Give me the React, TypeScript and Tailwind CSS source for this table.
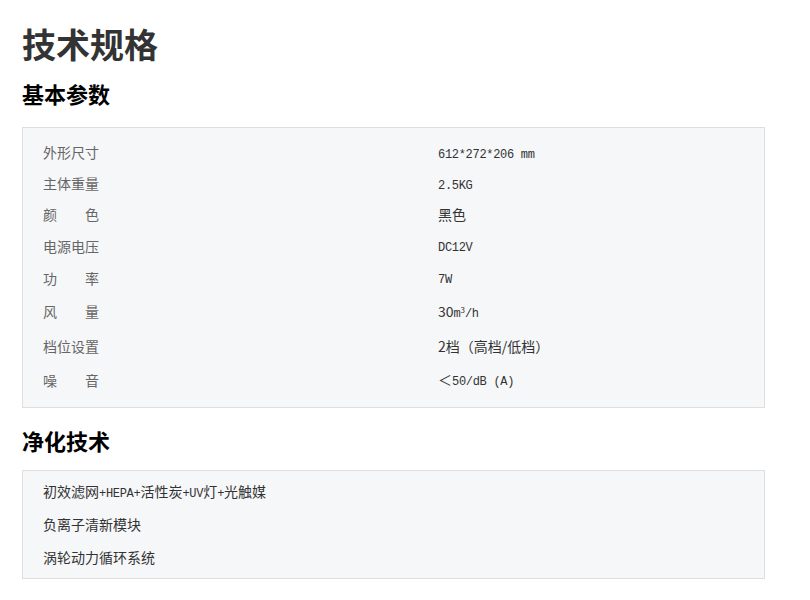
const CJK = "font-['Noto_Sans_CJK_SC','Noto_Sans',sans-serif]";
const MONO = "font-['Liberation_Mono','Noto_Sans_CJK_SC',monospace] text-[12px] tracking-[-0.3px]";

type Row = { label: string; value: React.ReactNode; h: string };

const SPECS: Row[] = [
  { label: "外形尺寸", value: <span className={MONO}>612*272*206 mm</span>, h: "h-[31px]" },
  { label: "主体重量", value: <span className={MONO}>2.5KG</span>, h: "h-[31px]" },
  { label: "颜　　色", value: <span>黑色</span>, h: "h-[31px]" },
  { label: "电源电压", value: <span className={MONO}>DC12V</span>, h: "h-[32px]" },
  { label: "功　　率", value: <span className={MONO}>7W</span>, h: "h-[32px]" },
  {
    label: "风　　量",
    value: (
      <span>
        30<span className={MONO}>m</span>
        <sup className="text-[8px]">3</sup>
        <span className={MONO}>/h</span>
      </span>
    ),
    h: "h-[35px]",
  },
  { label: "档位设置", value: <span>2档（高档/低档）</span>, h: "h-[34px]" },
  {
    label: "噪　　音",
    value: (
      <span>
        ＜<span className={MONO}>50/dB (A)</span>
      </span>
    ),
    h: "h-[34px]",
  },
];

const TECH: { text: React.ReactNode; h: string }[] = [
  {
    text: (
      <span>
        初效滤网<span className={MONO}>+HEPA+</span>活性炭<span className={MONO}>+UV</span>灯
        <span className={MONO}>+</span>光触媒
      </span>
    ),
    h: "h-[32px]",
  },
  { text: "负离子清新模块", h: "h-[32px]" },
  { text: "涡轮动力循环系统", h: "h-[34px]" },
];

export default function App() {
  return (
    <div className={`min-h-[600px] w-[810px] bg-white px-[22px] ${CJK}`}>
      <h1 className="pt-[27px] text-[34px] font-bold leading-[34px] text-[#333]">技术规格</h1>

      <h2 className="mt-[21px] text-[22px] font-bold leading-[22px] text-black">基本参数</h2>
      <div className="mt-[23px] w-[743px] border border-[#dfdfdf] bg-[#f6f7f9] pl-[20px] pt-[9px] pb-[10px]">
        {SPECS.map((r) => (
          <div key={r.label} className={`flex items-center ${r.h} text-[14px]`}>
            <div className="w-[395px] text-[#666]">{r.label}</div>
            <div className="text-[#333]">{r.value}</div>
          </div>
        ))}
      </div>

      <h2 className="mt-[21px] text-[22px] font-bold leading-[22px] text-black">净化技术</h2>
      <div className="mt-[19px] w-[743px] border border-[#dfdfdf] bg-[#f6f7f9] pl-[20px] pt-[5px] pb-[4px]">
        {TECH.map((t, i) => (
          <div key={i} className={`flex items-center ${t.h} text-[14px] text-[#333]`}>
            {t.text}
          </div>
        ))}
      </div>
    </div>
  );
}
